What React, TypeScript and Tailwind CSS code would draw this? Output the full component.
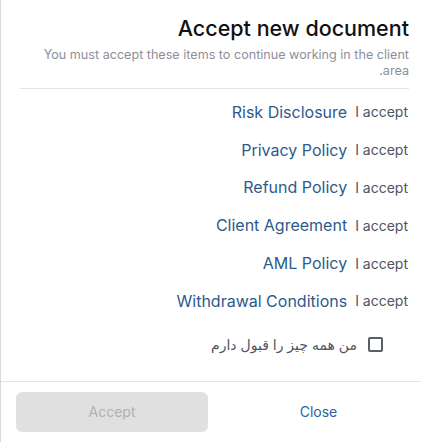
import React from "react";

const items = [
  "Risk Disclosure",
  "Privacy Policy",
  "Refund Policy",
  "Client Agreement",
  "AML Policy",
  "Withdrawal Conditions",
];

export default function App() {
  return (
    <div
      dir="rtl"
      className="w-[421px] h-[442px] bg-white border-l border-[#d5d9e2] flex flex-col overflow-hidden"
      style={{ fontFamily: "Inter, 'DejaVu Sans', 'Liberation Sans', sans-serif" }}
    >
      <div className="ml-[19px] mr-[12px] border-b border-[#e3e5ea] pt-[14px] pb-[9px]">
        <h1 className="text-[21.5px] leading-[28px] font-medium text-[#111111]">Accept new document</h1>
        <p className="mt-[5px] text-[12.6px] leading-[16px] text-[#8d909a]">
          You must accept these items to continue working in the client area.
        </p>
      </div>
      <div className="mr-[13px] pt-[4px] flex flex-col">
        {items.map((it) => (
          <div key={it} className="h-[37.8px] flex items-center gap-[8px]">
            <span className="text-[14px] text-[#4f5561]">I accept</span>
            <span className="text-[16px] text-[#2d5a8c]">{it}</span>
          </div>
        ))}
      </div>
      <div className="mr-[38px] mt-[17px] flex items-center gap-[11px]">
        <span className="w-[15px] h-[15px] border-2 border-[#5a5e66] rounded-[2px] box-border" />
        <span className="text-[14px] leading-[15px] text-[#4f5561]">من همه چیز را قبول دارم</span>
      </div>
      <div className="mt-[29px] border-t border-[#e3e5ea] flex pt-[10px] pl-[15px] gap-[8px]">
        <button className="flex-1 h-[40px] text-[14px] text-[#2a62a0]">Close</button>
        <button className="w-[192px] h-[40px] rounded-[6px] bg-[#e0e0e0] text-[14px] text-[#b0b0b0]">Accept</button>
      </div>
    </div>
  );
}
